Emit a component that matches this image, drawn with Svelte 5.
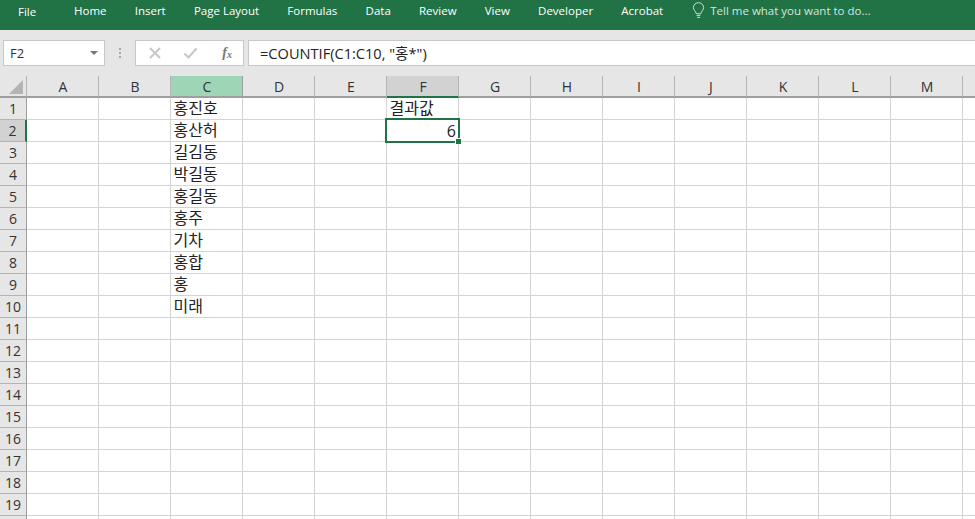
<script>
  const tabs = ['Home', 'Insert', 'Page Layout', 'Formulas', 'Data', 'Review', 'View', 'Developer', 'Acrobat'];
  const cols = ['A', 'B', 'C', 'D', 'E', 'F', 'G', 'H', 'I', 'J', 'K', 'L', 'M', ''];
  const rows = Array.from({ length: 20 }, (_, i) => i + 1);
  const names = ['홍진호', '홍산허', '길김동', '박길동', '홍길동', '홍주', '기차', '홍합', '홍', '미래'];

  function cellText(col, row) {
    if (col === 'C') return names[row - 1] ?? '';
    if (col === 'F' && row === 1) return '결과값';
    if (col === 'F' && row === 2) return '6';
    return '';
  }
</script>

<div class="excel">
  <nav class="ribbon">
    <span class="file">File</span>
    <div class="tabs">
      {#each tabs as tab}
        <span class="tab">{tab}</span>
      {/each}
    </div>
    <div class="tell">
      <svg width="13" height="17" viewBox="0 0 14 18" fill="none" stroke="#d5e6dc" stroke-width="1">
        <path d="M4.5 12.5 C4.5 10 1.5 9 1.5 5.8 A5.5 5.2 0 0 1 12.5 5.8 C12.5 9 9.5 10 9.5 12.5 Z" />
        <path d="M5 14.5 H9 M5.5 16.5 H8.5" />
      </svg>
      <span>Tell me what you want to do...</span>
    </div>
  </nav>

  <div class="formula-bar">
    <div class="name-box">
      <span>F2</span>
      <i class="caret"></i>
    </div>
    <div class="grip"><b></b><b></b><b></b></div>
    <div class="buttons">
      <svg width="14" height="14" viewBox="0 0 14 14" stroke="#c8c8c8" stroke-width="2" fill="none">
        <path d="M2 2 L12 12 M12 2 L2 12" />
      </svg>
      <svg class="check" width="15" height="14" viewBox="0 0 15 14" stroke="#c8c8c8" stroke-width="2.2" fill="none">
        <path d="M1.5 7.5 L5.5 11.5 L13.5 2.5" />
      </svg>
      <span class="fx">f<sub>x</sub></span>
    </div>
    <div class="formula">=COUNTIF(C1:C10, "홍*")</div>
  </div>

  <div class="sheet">
    <div class="corner"><i></i></div>
    {#each cols as col}
      <div class="col-head" class:sel-c={col === 'C'} class:sel-f={col === 'F'}>{col}</div>
    {/each}
    {#each rows as row}
      <div class="row-head" class:sel-r={row === 2}>{row < 20 ? row : ''}</div>
      {#each cols as col}
        <div class="cell" class:active={col === 'F' && row === 2}>
          {cellText(col, row)}
        </div>
      {/each}
    {/each}
  </div>
</div>

<style>
  :global(body) {
    margin: 0;
    overflow: hidden;
    background: #fff;
  }

  .excel {
    width: 975px;
    height: 519px;
    overflow: hidden;
    font-family: "Open Sans", "Noto Sans CJK KR", sans-serif;
  }

  .ribbon {
    height: 30px;
    box-sizing: border-box;
    padding-bottom: 10px;
    background: #217346;
    color: #fff;
    display: flex;
    align-items: center;
    font-size: 11.5px;
  }

  .file {
    width: 55px;
    padding-left: 18px;
    box-sizing: border-box;
    margin-top: 2px;
  }

  .tabs {
    display: flex;
    margin-left: 19px;
    gap: 28.2px;
  }

  .tell {
    display: flex;
    align-items: center;
    gap: 5px;
    margin-left: 29px;
    color: #d5e6dc;
  }

  .formula-bar {
    height: 46px;
    box-sizing: border-box;
    background: #e6e6e6;
    padding-top: 10px;
    display: flex;
    align-items: flex-start;
    font-size: 13px;
  }

  .name-box {
    width: 102px;
    height: 26px;
    margin-left: 3px;
    box-sizing: border-box;
    background: #fff;
    border: 1px solid #c8c8c8;
    display: flex;
    align-items: center;
    justify-content: space-between;
    padding: 0 6px 0 6px;
    color: #333;
  }

  .caret {
    width: 0;
    height: 0;
    border: 4px solid transparent;
    border-top: 4px solid #777;
    border-bottom: 0;
  }

  .grip {
    width: 30px;
    height: 26px;
    display: flex;
    flex-direction: column;
    align-items: center;
    justify-content: center;
    gap: 2px;
  }

  .grip b {
    width: 2px;
    height: 2px;
    background: #a8a8a8;
  }

  .buttons {
    width: 109px;
    height: 26px;
    box-sizing: border-box;
    background: #fff;
    border: 1px solid #c8c8c8;
    display: flex;
    align-items: center;
    padding: 0 11px 0 12px;
    justify-content: space-between;
  }

  .check {
    margin-right: 3px;
  }

  .fx {
    font-family: "Liberation Serif", serif;
    font-style: italic;
    font-weight: 700;
    font-size: 14px;
    color: #777;
  }

  .fx sub {
    font-size: 10px;
    vertical-align: -1px;
  }

  .formula {
    flex: 1;
    height: 26px;
    margin-left: 4px;
    box-sizing: border-box;
    background: #fff;
    border: 1px solid #c8c8c8;
    border-right: 0;
    padding-left: 11px;
    line-height: 24px;
    font-size: 14.6px;
    color: #222;
  }

  .sheet {
    display: grid;
    grid-template-columns: 27px repeat(14, 72px);
    grid-auto-rows: 22px;
    font-size: 16px;
    color: #222;
  }

  .corner {
    background: #e6e6e6;
    border-right: 1px solid #b4b4b4;
    border-bottom: 2px solid #9e9e9e;
    box-sizing: border-box;
    position: relative;
  }

  .corner i {
    position: absolute;
    right: 3px;
    bottom: 2px;
    border-style: solid;
    border-width: 0 0 14px 14px;
    border-color: transparent transparent #b4b4b4 transparent;
  }

  .col-head {
    background: #e6e6e6;
    border-right: 1px solid #b4b4b4;
    border-bottom: 2px solid #9e9e9e;
    box-sizing: border-box;
    padding-left: 1px;
    text-align: center;
    line-height: 21px;
    font-size: 14px;
    color: #333;
  }

  .col-head.sel-c {
    background: #9fd5b7;
    border-right-color: #9e9e9e;
  }

  .col-head.sel-f {
    background: #d2d2d2;
    border-bottom-color: #217346;
  }

  .row-head {
    background: #e6e6e6;
    border-right: 1px solid #9e9e9e;
    border-bottom: 1px solid #b4b4b4;
    box-sizing: border-box;
    text-align: center;
    line-height: 21px;
    font-size: 14px;
    color: #333;
  }

  .row-head.sel-r {
    background: #d2d2d2;
    border-right: 2px solid #217346;
  }

  .cell {
    border-right: 1px solid #d4d4d4;
    border-bottom: 1px solid #d4d4d4;
    box-sizing: border-box;
    padding-left: 2.5px;
    line-height: 20px;
    white-space: nowrap;
    color: #222;
    background: #fff;
  }

  .cell.active {
    text-align: right;
    position: relative;
    padding-right: 2px;
    line-height: 22px;
    z-index: 1;
  }

  .cell.active::before {
    content: '';
    position: absolute;
    inset: -2px;
    border: 2px solid #217346;
  }

  .cell.active::after {
    content: '';
    position: absolute;
    right: -3px;
    bottom: -3px;
    width: 5px;
    height: 5px;
    background: #217346;
    border: 1px solid #fff;
    border-width: 1px 0 0 1px;
  }
</style>
